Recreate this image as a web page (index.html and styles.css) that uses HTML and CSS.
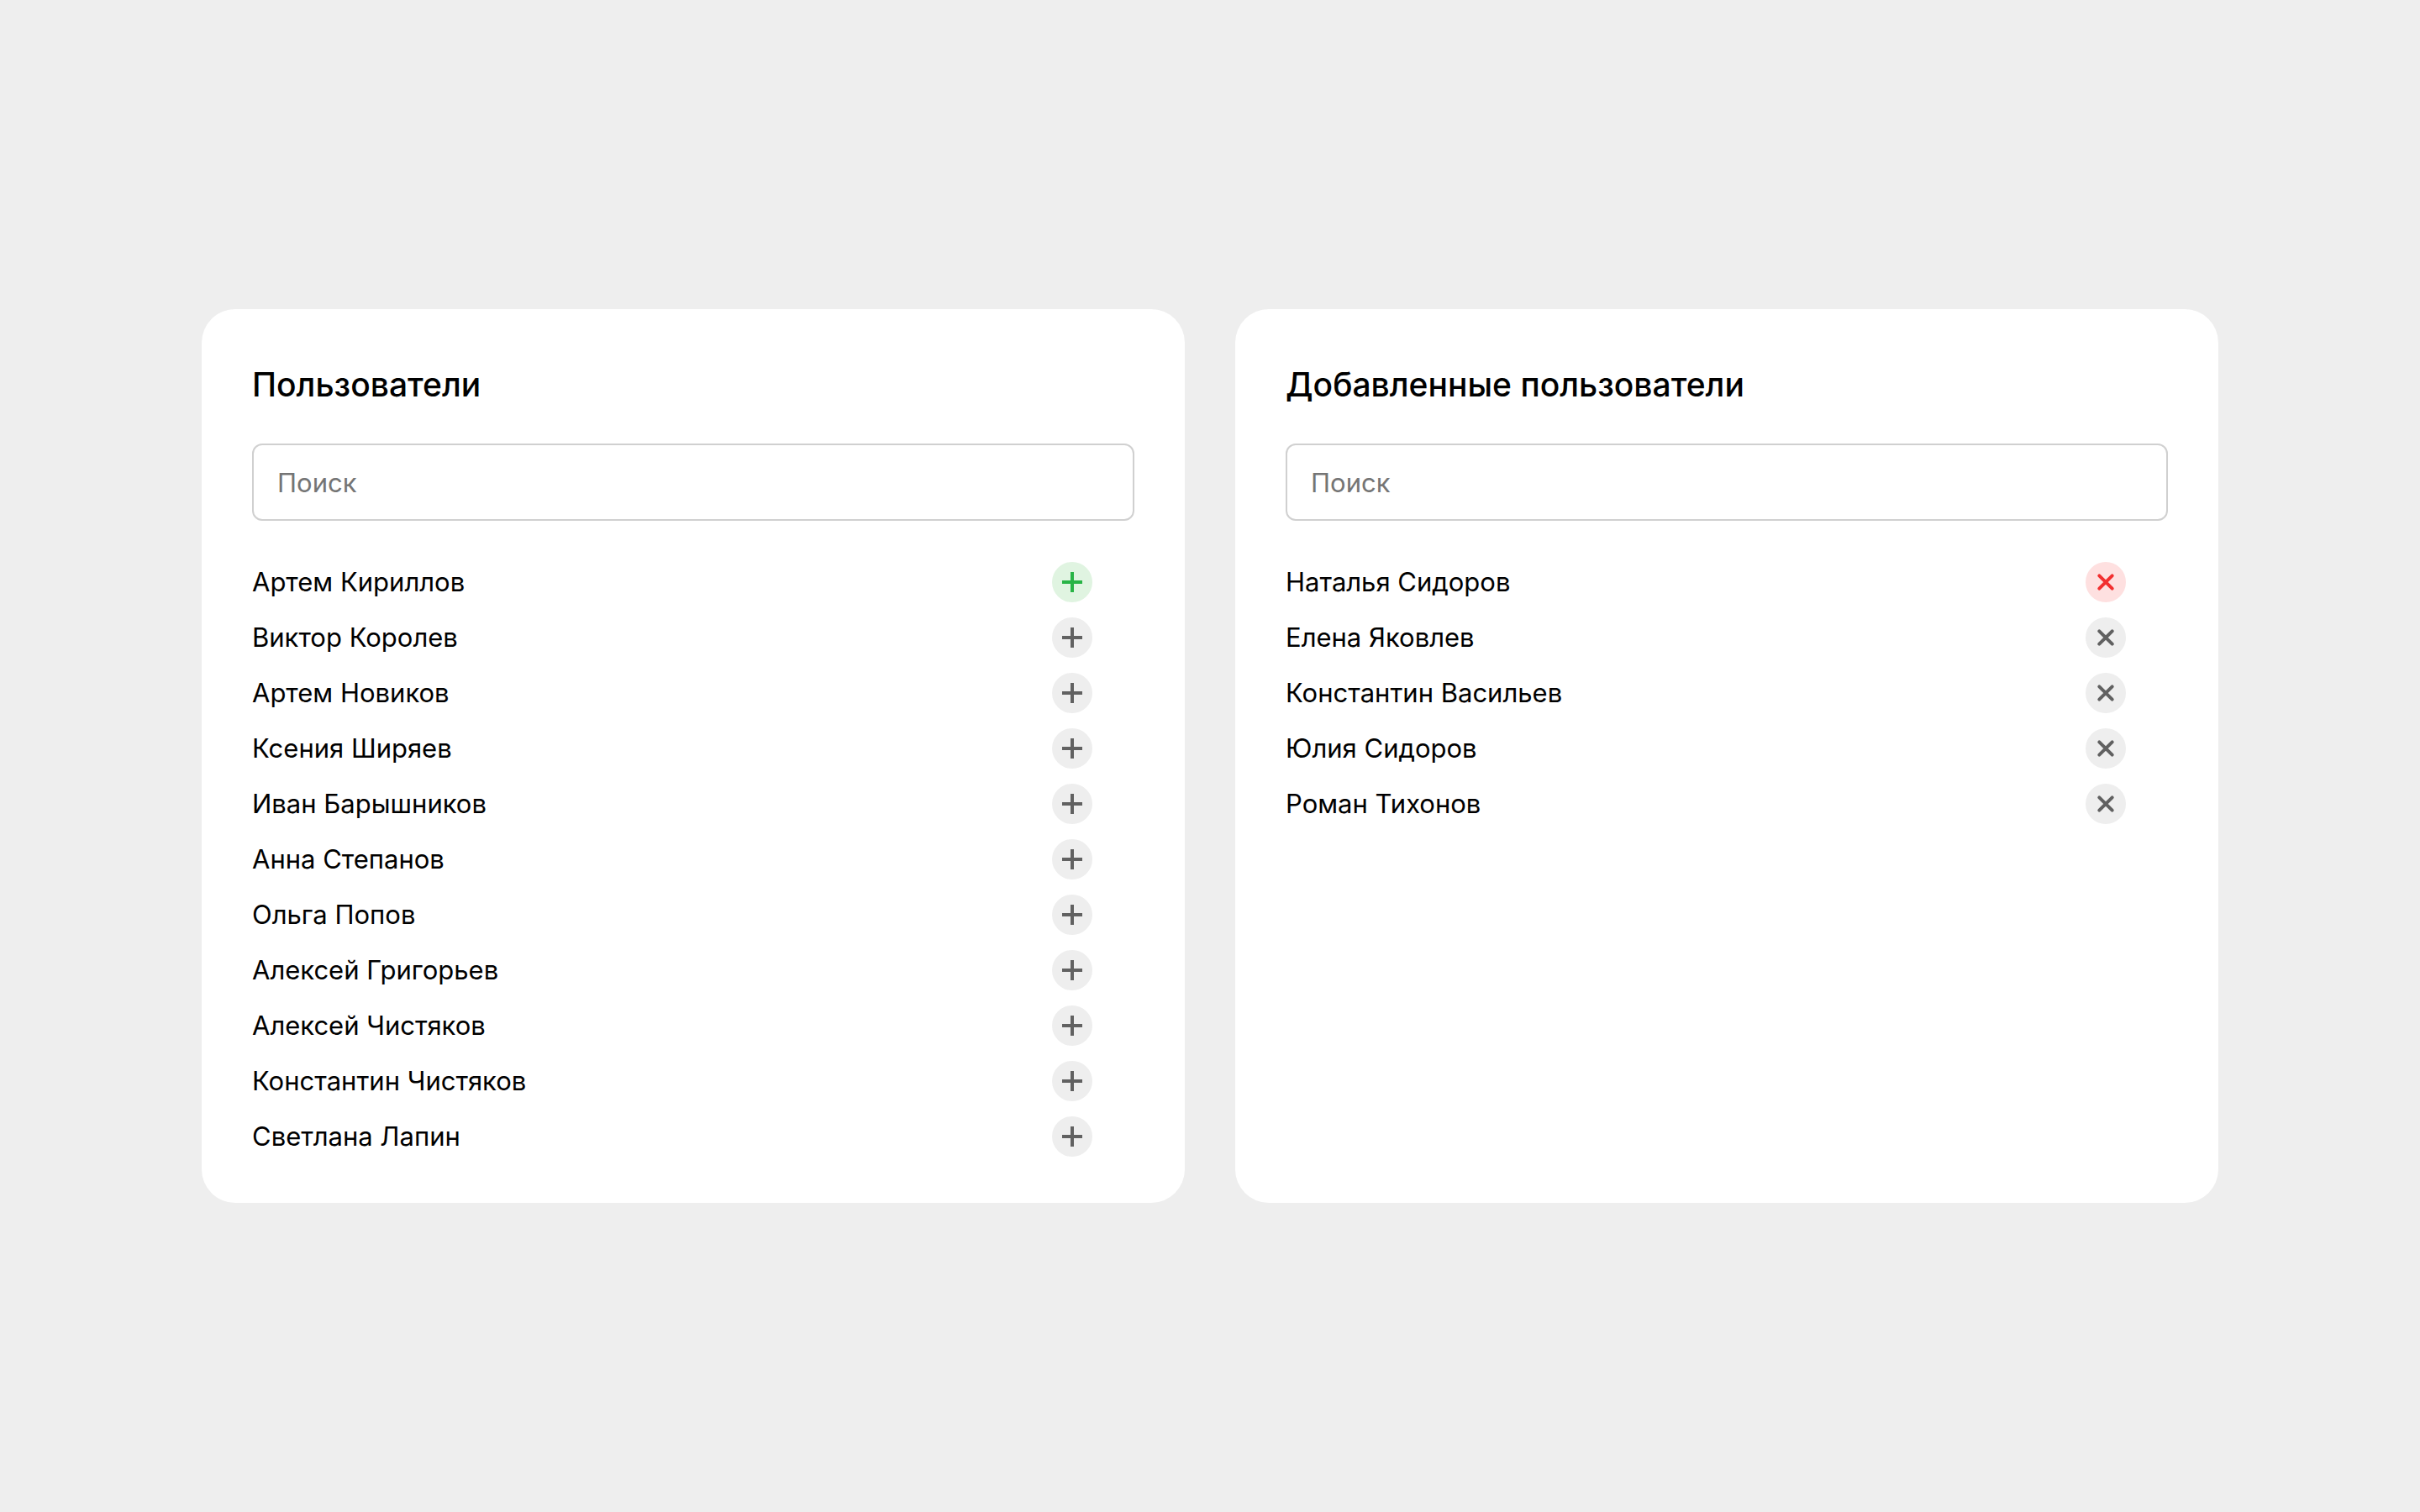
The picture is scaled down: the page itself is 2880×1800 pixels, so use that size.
FILE: index.html
```html
<!DOCTYPE html>
<html lang="ru">
<head>
<meta charset="utf-8">
<title>Пользователи</title>
<link rel="stylesheet" href="styles.css">
</head>
<body>
<svg class="sprite" aria-hidden="true">
<symbol id="plus" viewBox="0 0 48 48"><path d="M24 12v24M12 24h24"/></symbol>
<symbol id="cross" viewBox="0 0 48 48"><path d="M16.300 16.300l15.400 15.400M31.700 16.300L16.300 31.700" stroke-linecap="round"/></symbol>
</svg>
<main class="panels">
<section class="panel">
<h2 class="title">Пользователи</h2>
<input class="search" type="search" placeholder="Поиск" aria-label="Поиск пользователей">
<ul class="list">
<li class="user"><span>Артем Кириллов</span><button class="action action-add" type="button" aria-label="Добавить"><svg><use href="#plus"/></svg></button></li>
<li class="user"><span>Виктор Королев</span><button class="action" type="button" aria-label="Добавить"><svg><use href="#plus"/></svg></button></li>
<li class="user"><span>Артем Новиков</span><button class="action" type="button" aria-label="Добавить"><svg><use href="#plus"/></svg></button></li>
<li class="user"><span>Ксения Ширяев</span><button class="action" type="button" aria-label="Добавить"><svg><use href="#plus"/></svg></button></li>
<li class="user"><span>Иван Барышников</span><button class="action" type="button" aria-label="Добавить"><svg><use href="#plus"/></svg></button></li>
<li class="user"><span>Анна Степанов</span><button class="action" type="button" aria-label="Добавить"><svg><use href="#plus"/></svg></button></li>
<li class="user"><span>Ольга Попов</span><button class="action" type="button" aria-label="Добавить"><svg><use href="#plus"/></svg></button></li>
<li class="user"><span>Алексей Григорьев</span><button class="action" type="button" aria-label="Добавить"><svg><use href="#plus"/></svg></button></li>
<li class="user"><span>Алексей Чистяков</span><button class="action" type="button" aria-label="Добавить"><svg><use href="#plus"/></svg></button></li>
<li class="user"><span>Константин Чистяков</span><button class="action" type="button" aria-label="Добавить"><svg><use href="#plus"/></svg></button></li>
<li class="user"><span>Светлана Лапин</span><button class="action" type="button" aria-label="Добавить"><svg><use href="#plus"/></svg></button></li>
</ul>
</section>
<section class="panel">
<h2 class="title">Добавленные пользователи</h2>
<input class="search" type="search" placeholder="Поиск" aria-label="Поиск добавленных пользователей">
<ul class="list">
<li class="user"><span>Наталья Сидоров</span><button class="action action-remove" type="button" aria-label="Удалить"><svg><use href="#cross"/></svg></button></li>
<li class="user"><span>Елена Яковлев</span><button class="action" type="button" aria-label="Удалить"><svg><use href="#cross"/></svg></button></li>
<li class="user"><span>Константин Васильев</span><button class="action" type="button" aria-label="Удалить"><svg><use href="#cross"/></svg></button></li>
<li class="user"><span>Юлия Сидоров</span><button class="action" type="button" aria-label="Удалить"><svg><use href="#cross"/></svg></button></li>
<li class="user"><span>Роман Тихонов</span><button class="action" type="button" aria-label="Удалить"><svg><use href="#cross"/></svg></button></li>
</ul>
</section>
</main>
</body>
</html>
```
FILE: styles.css
```css
* { box-sizing: border-box; }
body {
  margin: 0;
  min-height: 100vh;
  display: flex;
  align-items: center;
  justify-content: center;
  background: #eee;
  color: #000;
  font-family: Inter, "Liberation Sans", sans-serif;
  font-size: 31px;
  line-height: 48px;
}
.sprite { display: none; }
.panels {
  width: 100%;
  max-width: 2400px;
  display: grid;
  grid-template-columns: 1fr 1fr;
  gap: 60px;
}
.panel {
  padding: 60px 60px 55px;
  background: #fff;
  border-radius: 40px;
}
.title {
  margin: 0 0 40px;
  font-size: 39px;
  line-height: 60px;
  font-weight: 500;
}
.search {
  display: block;
  width: 100%;
  height: 92px;
  margin: 0 0 49px;
  padding: 0 28px;
  border: 2px solid #d0d0d0;
  border-radius: 12px;
  background: #fff;
  font: inherit;
  appearance: none;
}
.search::placeholder { color: #757575; }
.list {
  margin: 0;
  padding: 0 50px 0 0;
  list-style: none;
  display: grid;
  gap: 18px;
}
.user {
  display: flex;
  justify-content: space-between;
  align-items: center;
}
.action {
  width: 48px;
  height: 48px;
  padding: 0;
  border: 0;
  border-radius: 50%;
  background: #eee;
  color: #616161;
}
.action svg {
  display: block;
  width: 48px;
  height: 48px;
  fill: none;
  stroke: currentColor;
  stroke-width: 4;
}
.action-add { background: #e0f4e1; color: #28b446; }
.action-remove { background: #fee0e0; color: #f23030; }
```
